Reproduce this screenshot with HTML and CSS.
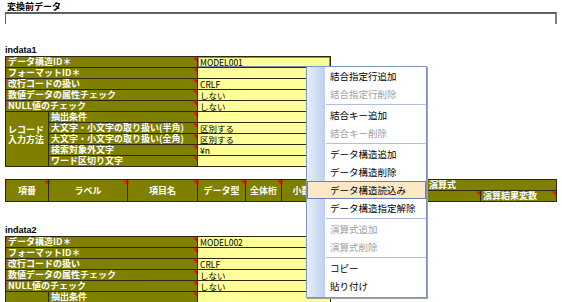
FILE: index.html
```html
<!DOCTYPE html>
<html>
<head>
  <meta charset="UTF-8">
  <title>変換前データ</title>
  <link rel="stylesheet" href="styles.css">
</head>
<body>
  <div class="title">変換前データ</div>
  <div class="frame"></div>

  <!-- indata1 -->
  <div class="data-name">indata1</div>
  <table class="def">
    <colgroup><col class="c-group"><col class="c-sub"><col class="c-val"></colgroup>
    <tr><td class="lbl" colspan="2">データ構造ID＊</td><td class="val focus">MODEL001</td></tr>
    <tr><td class="lbl" colspan="2">フォーマットID＊</td><td class="val"></td></tr>
    <tr><td class="lbl" colspan="2">改行コードの扱い</td><td class="val">CRLF</td></tr>
    <tr><td class="lbl" colspan="2">数値データの属性チェック</td><td class="val">しない</td></tr>
    <tr><td class="lbl" colspan="2">NULL値のチェック</td><td class="val">しない</td></tr>
    <tr><td class="lbl group" rowspan="5">レコード<br>入力方法</td><td class="lbl">抽出条件</td><td class="val"></td></tr>
    <tr><td class="lbl">大文字・小文字の取り扱い(半角)</td><td class="val">区別する</td></tr>
    <tr><td class="lbl">大文字・小文字の取り扱い(全角)</td><td class="val">区別する</td></tr>
    <tr><td class="lbl">検索対象外文字</td><td class="val">¥n</td></tr>
    <tr><td class="lbl">ワード区切り文字</td><td class="val"></td></tr>
  </table>

  <table class="cols">
    <colgroup>
      <col style="width:43px"><col style="width:79px"><col style="width:70px">
      <col style="width:48px"><col style="width:36px"><col style="width:49px">
      <col style="width:96px"><col style="width:54px"><col style="width:76px">
    </colgroup>
    <tr>
      <td class="lbl head" rowspan="2">項番</td>
      <td class="lbl head" rowspan="2">ラベル</td>
      <td class="lbl head" rowspan="2">項目名</td>
      <td class="lbl head" rowspan="2">データ型</td>
      <td class="lbl head" rowspan="2">全体桁</td>
      <td class="lbl head" rowspan="2">小数桁</td>
      <td class="lbl head" rowspan="2">初期値</td>
      <td class="plain" colspan="2">演算式</td>
    </tr>
    <tr>
      <td class="lbl"></td>
      <td class="lbl">演算結果変数</td>
    </tr>
  </table>

  <!-- indata2 -->
  <div class="data-name second">indata2</div>
  <table class="def">
    <colgroup><col class="c-group"><col class="c-sub"><col class="c-val"></colgroup>
    <tr><td class="lbl" colspan="2">データ構造ID＊</td><td class="val">MODEL002</td></tr>
    <tr><td class="lbl" colspan="2">フォーマットID＊</td><td class="val"></td></tr>
    <tr><td class="lbl" colspan="2">改行コードの扱い</td><td class="val">CRLF</td></tr>
    <tr><td class="lbl" colspan="2">数値データの属性チェック</td><td class="val">しない</td></tr>
    <tr><td class="lbl" colspan="2">NULL値のチェック</td><td class="val">しない</td></tr>
    <tr><td class="lbl group" rowspan="5">レコード<br>入力方法</td><td class="lbl">抽出条件</td><td class="val"></td></tr>
    <tr><td class="lbl">大文字・小文字の取り扱い(半角)</td><td class="val">区別する</td></tr>
    <tr><td class="lbl">大文字・小文字の取り扱い(全角)</td><td class="val">区別する</td></tr>
    <tr><td class="lbl">検索対象外文字</td><td class="val">¥n</td></tr>
    <tr><td class="lbl">ワード区切り文字</td><td class="val"></td></tr>
  </table>

  <!-- 右クリックメニュー -->
  <div class="menu">
    <div class="item">結合指定行追加</div>
    <div class="item off">結合指定行削除</div>
    <div class="sep"></div>
    <div class="item">結合キー追加</div>
    <div class="item off">結合キー削除</div>
    <div class="sep"></div>
    <div class="item">データ構造追加</div>
    <div class="item">データ構造削除</div>
    <div class="item hover">データ構造読込み</div>
    <div class="item">データ構造指定解除</div>
    <div class="sep"></div>
    <div class="item off">演算式追加</div>
    <div class="item off">演算式削除</div>
    <div class="sep"></div>
    <div class="item">コピー</div>
    <div class="item">貼り付け</div>
  </div>
</body>
</html>
```

FILE: styles.css
```css
body {
  margin: 0;
  padding: 1px 5px 0;
  font-family: "Noto Sans CJK JP", sans-serif;
  background: #fff;
  position: relative;
}

.title {
  font-size: 9px;
  font-weight: bold;
  line-height: 11px;
  height: 11px;
  padding-left: 2px;
}
.frame {
  height: 10px;
  border-top: 2px solid #606060;
  border-left: 1px solid #606060;
  border-right: 2px solid #808080;
}

.data-name {
  font-family: "Liberation Sans", sans-serif;
  font-size: 9px;
  font-weight: bold;
  line-height: 10px;
  margin-top: 21px;
}
.data-name.second { margin-top: 23px; }

table {
  border-collapse: collapse;
  table-layout: fixed;
}
.def { width: 325px; margin-top: 1px; }
.c-group { width: 43px; }
.c-sub { width: 149px; }
.c-val { width: 133px; }

td {
  border: 1px solid #2a2a10;
  height: 10px;
  padding: 0 2px;
  font-size: 9px;
  line-height: 10px;
  white-space: nowrap;
  overflow: hidden;
}
.lbl {
  background: linear-gradient(225deg, #ff0000 3px, #808000 3px);
  color: #fff;
  font-weight: bold;
}
.group { background: #808000; vertical-align: middle; padding-bottom: 8px; }
.val {
  background: #ffff99;
  color: #000;
  font-size: 8.5px;
}
.focus { box-shadow: inset 0 0 0 1px #7d89b3; }

.cols { width: 551px; margin-top: 12px; }
.head { text-align: center; }
.plain { background: #808000; color: #fff; font-weight: bold; }

/* context menu */
.menu {
  position: absolute;
  left: 306px;
  top: 66px;
  width: 121px;
  box-sizing: border-box;
  padding: 0 0 2px;
  border: 1px solid #7f93c4;
  background: linear-gradient(to right, #e8eff9, #bccfef 18px, #fff 18px);
  font-size: 9.5px;
  box-shadow: 1px 1px 0 #a0a0a0;
}
.item {
  height: 18px;
  line-height: 18px;
  padding-left: 23px;
  white-space: nowrap;
  box-sizing: border-box;
}
.item.off { color: #a0a0a0; }
.item.hover {
  background: #fde8c5;
  border: 1px solid #6d7fb5;
  line-height: 16px;
  padding-left: 22px;
}
.sep {
  height: 1px;
  margin: 1px 0 1px 19px;
  background: #adc0e4;
}
```
